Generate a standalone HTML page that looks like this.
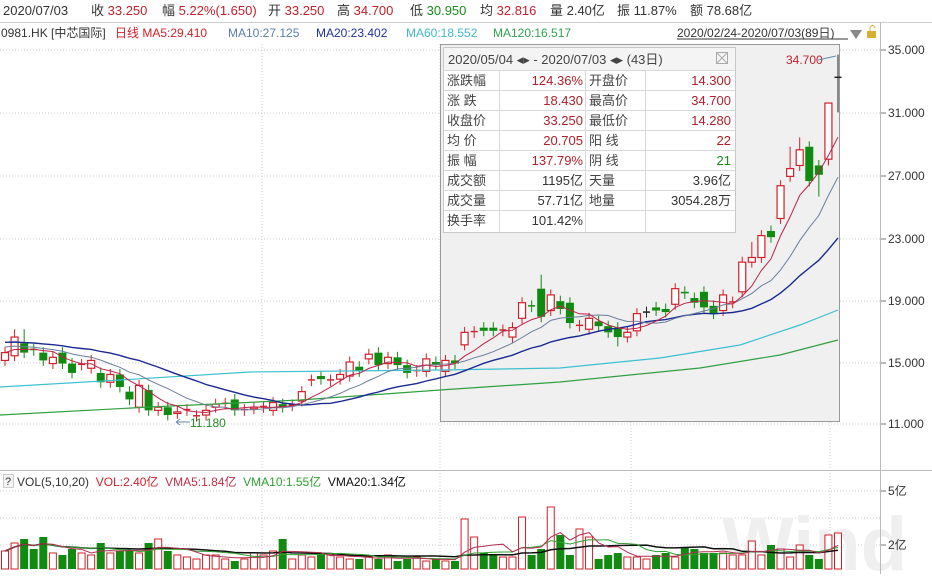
<!DOCTYPE html><html><head><meta charset="utf-8"><style>
body{margin:0;width:932px;height:574px;overflow:hidden;background:#fff;font-family:"Liberation Sans","Noto Sans CJK SC",sans-serif;}
svg text{font-family:"Liberation Sans","Noto Sans CJK SC",sans-serif;}
</style></head><body>
<svg id="s" width="932" height="574" xmlns="http://www.w3.org/2000/svg">
<rect width="932" height="574" fill="#fff"/>
<!-- top bar -->
<g font-size="13" fill="#333">
<text x="3" y="15">2020/07/03</text>
<text x="91" y="15">收 <tspan fill="#c0202a">33.250</tspan></text>
<text x="162" y="15">幅 <tspan fill="#c0202a">5.22%(1.650)</tspan></text>
<text x="268" y="15">开 <tspan fill="#c0202a">33.250</tspan></text>
<text x="337" y="15">高 <tspan fill="#c0202a">34.700</tspan></text>
<text x="410" y="15">低 <tspan fill="#1a8a1a">30.950</tspan></text>
<text x="480" y="15">均 <tspan fill="#c0202a">32.816</tspan></text>
<text x="550" y="15">量 2.40亿</text>
<text x="617" y="15">振 11.87%</text>
<text x="690" y="15">额 78.68亿</text>
</g>
<line x1="0" y1="22.5" x2="932" y2="22.5" stroke="#ccc"/>
<g font-size="12">
<text x="1" y="37" fill="#333">0981.HK [中芯国际]</text>
<text x="115" y="37" fill="#d0202a">日线 MA5:29.410</text>
<text x="228" y="37" fill="#5a7fa8">MA10:27.125</text>
<text x="316" y="37" fill="#2030a0">MA20:23.402</text>
<text x="406" y="37" fill="#40b8c8">MA60:18.552</text>
<text x="493" y="37" fill="#30a050">MA120:16.517</text>
</g>
<text x="677" y="37" font-size="12" fill="#333">2020/02/24-2020/07/03(89日)</text>
<line x1="677" y1="39" x2="848" y2="39" stroke="#333"/>
<path d="M850 30 L862 30 L856 39 Z" fill="#888"/>
<rect x="867" y="31" width="9" height="7" fill="#d8b030"/>
<path d="M870 31 v-3 a2.5 2.5 0 0 1 5 0" fill="none" stroke="#d8b030"/>
<!-- grid -->
<g stroke="#ccc" stroke-dasharray="1,2">
<line x1="0" y1="50" x2="880" y2="50"/><line x1="0" y1="113" x2="880" y2="113"/><line x1="0" y1="176" x2="880" y2="176"/><line x1="0" y1="239" x2="880" y2="239"/><line x1="0" y1="301" x2="880" y2="301"/><line x1="0" y1="363" x2="880" y2="363"/><line x1="0" y1="424" x2="880" y2="424"/>
<line x1="262" y1="44" x2="262" y2="570"/><line x1="440" y1="44" x2="440" y2="570"/><line x1="631" y1="44" x2="631" y2="570"/><line x1="830" y1="44" x2="830" y2="570"/>
<line x1="0" y1="491" x2="880" y2="491"/><line x1="0" y1="518" x2="880" y2="518"/><line x1="0" y1="545" x2="880" y2="545"/>
</g>
<text x="722" y="570" font-size="76" font-weight="bold" fill="#efefef">Wind</text>
<line x1="880.5" y1="22" x2="880.5" y2="574" stroke="#bbb"/>
<g font-size="12" fill="#333">
<text x="888" y="54">35.000</text><text x="888" y="117">31.000</text><text x="888" y="180">27.000</text><text x="888" y="243">23.000</text><text x="888" y="305">19.000</text><text x="888" y="367">15.000</text><text x="888" y="428">11.000</text>
<text x="888" y="495">5亿</text><text x="888" y="549">2亿</text>
</g>
<g stroke="#777"><line x1="881" y1="50" x2="886" y2="50"/><line x1="881" y1="113" x2="886" y2="113"/><line x1="881" y1="176" x2="886" y2="176"/><line x1="881" y1="239" x2="886" y2="239"/><line x1="881" y1="301" x2="886" y2="301"/><line x1="881" y1="363" x2="886" y2="363"/><line x1="881" y1="424" x2="886" y2="424"/><line x1="881" y1="491" x2="886" y2="491"/><line x1="881" y1="545" x2="886" y2="545"/></g>
<!-- selection -->
<rect x="440.5" y="44.5" width="399" height="377" fill="#f0f0f0" stroke="#999"/>
<line x1="0" y1="470.5" x2="932" y2="470.5" stroke="#bbb"/>
<g id="chart"></g>
<!-- info panel -->
<g font-size="13">
<rect x="443.5" y="47.5" width="292" height="185" fill="#fff" stroke="#c8c8c8"/>
<rect x="444" y="48" width="291" height="22" fill="#f4f4f4"/>
<text x="448" y="64" fill="#444">2020/05/04 ◂▸ - 2020/07/03 ◂▸  (43日)</text>
<rect x="716.5" y="52.5" width="11" height="11" fill="none" stroke="#aaa"/><path d="M717 53 L727 63 M727 53 L717 63" stroke="#aaa"/>
<g stroke="#d8d8d8"><line x1="443" y1="70.5" x2="735" y2="70.5"/><line x1="443" y1="90.5" x2="735" y2="90.5"/><line x1="443" y1="110.5" x2="735" y2="110.5"/><line x1="443" y1="130.5" x2="735" y2="130.5"/><line x1="443" y1="150.5" x2="735" y2="150.5"/><line x1="443" y1="170.5" x2="735" y2="170.5"/><line x1="443" y1="190.5" x2="735" y2="190.5"/><line x1="443" y1="210.5" x2="735" y2="210.5"/>
<line x1="499.5" y1="70" x2="499.5" y2="232"/><line x1="585.5" y1="70" x2="585.5" y2="232"/><line x1="645.5" y1="70" x2="645.5" y2="232"/></g>
<g fill="#444"><text x="447" y="85">涨跌幅</text><text x="447" y="105">涨  跌</text><text x="447" y="125">收盘价</text><text x="447" y="145">均  价</text><text x="447" y="165">振  幅</text><text x="447" y="185">成交额</text><text x="447" y="205">成交量</text><text x="447" y="225">换手率</text>
<text x="589" y="85">开盘价</text><text x="589" y="105">最高价</text><text x="589" y="125">最低价</text><text x="589" y="145">阳  线</text><text x="589" y="165">阴  线</text><text x="589" y="185">天量</text><text x="589" y="205">地量</text></g>
<g text-anchor="end" fill="#b0202a"><text x="583" y="85">124.36%</text><text x="583" y="105">18.430</text><text x="583" y="125">33.250</text><text x="583" y="145">20.705</text><text x="583" y="165">137.79%</text>
<text x="731" y="85">14.300</text><text x="731" y="105">34.700</text><text x="731" y="125">14.280</text><text x="731" y="145">22</text></g>
<g text-anchor="end" fill="#333"><text x="583" y="185">1195亿</text><text x="583" y="205">57.71亿</text><text x="583" y="225">101.42%</text><text x="731" y="185">3.96亿</text><text x="731" y="205">3054.28万</text><text x="731" y="165" fill="#1a8a1a">21</text></g>
</g>
<text x="786" y="64" font-size="12" fill="#c0202a">34.700</text>
<path d="M818 60 L836 56" stroke="#5a8fa8"/>
<text x="190" y="427" font-size="12" fill="#2a8a2a">11.180</text>
<path d="M176 422 L190 422 M176 422 l4 -3 M176 422 l4 3" stroke="#6a8ab0" fill="none"/>
<!-- vol header -->
<rect x="3.5" y="474.5" width="10" height="13" fill="#f4f4f4" stroke="#ccc"/>
<text x="5" y="485" font-size="11" fill="#333">?</text>
<text x="17" y="486" font-size="12" fill="#333" xml:space="preserve">VOL(5,10,20)  <tspan fill="#d0202a">VOL:2.40亿</tspan>  <tspan fill="#c0304a">VMA5:1.84亿</tspan>  <tspan fill="#30a030">VMA10:1.55亿</tspan>  <tspan fill="#111">VMA20:1.34亿</tspan></text>
</svg>
<script>
var D=[[15.1,15.6],[15.4,16.6],[16.2,15.6],[15.8,15.75],[15.6,15.1],[14.9,15.3],[15.6,14.9],[14.9,14.3],[14.8,14.85],[14.6,15.1],[14.3,13.7],[13.7,14.2],[14.2,13.4],[13.1,12.6],[12.1,13.5],[13.2,11.9],[11.9,12.1],[12.1,11.6],[11.7,11.8],[11.9,11.95],[11.5,11.55],[11.6,11.9],[12.1,12.3],[12.3,12.35],[12.6,11.9],[11.9,11.95],[12.0,12.1],[12.1,12.15],[11.9,12.4],[12.3,12.1],[12.2,12.25],[12.5,13.1],[13.8,13.85],[14.1,13.9],[13.8,13.85],[13.9,14.2],[14.1,15.0],[14.7,14.4],[15.2,15.5],[15.6,14.8],[14.9,15.3],[15.3,14.8],[14.8,14.3],[14.4,14.45],[14.4,15.2],[15.0,14.8],[14.4,15.1],[15.1,14.9],[16.1,16.9],[16.9,16.95],[17.2,17.0],[17.2,17.0],[17.0,17.05],[16.6,17.2],[17.8,18.8],[18.6,18.55],[19.7,17.9],[18.3,19.3],[18.9,18.4],[18.8,17.5],[17.3,17.35],[17.1,17.8],[17.6,17.3],[17.3,16.9],[17.2,16.6],[16.6,16.9],[17.0,18.1],[18.2,18.2],[18.5,18.3],[18.4,18.2],[18.7,19.7],[19.5,19.4],[19.1,18.8],[19.5,18.5],[18.6,18.1],[18.3,19.3],[18.8,18.85],[19.5,21.4],[21.4,21.7],[21.7,23.1],[23.4,23.0],[24.2,26.3],[26.9,27.4],[27.6,28.6],[28.8,26.6],[27.6,27.0],[28.0,31.6],[33.25,33.25]];
var H={1:17.1,2:17.1,56:20.6,78:22.7,82:28.8,83:29.4,86:27.6,87:34.7};var L={20:11.18,64:16.0,85:25.6,87:31.0};
var n=D.length,x0=5,dx=(838-5)/(n-1);
function Y(p){return 50+(35-p)*15.6;}
var s='';
var vh=[18,26,30,20,32,16,14,20,16,14,26,16,18,18,16,26,30,18,14,12,10,14,14,10,8,10,16,14,18,30,10,14,12,16,14,12,10,10,12,10,14,8,10,12,8,10,8,8,50,32,16,14,12,12,52,14,20,62,34,14,40,32,10,14,16,12,12,10,14,16,12,22,20,16,16,16,14,14,28,14,24,20,12,24,14,10,34,36];
for(var i=0;i<n;i++){var o=D[i][0],c=D[i][1],x=x0+i*dx;var hi=H[i]||Math.max(o,c)+0.35,lo=L[i]||Math.min(o,c)-0.35;
var up=c>=o,col=(i==n-1||i==67)?'#222':(up?'#d0202a':'#108a10');
var yt=Y(Math.max(o,c)),yb=Y(Math.min(o,c));
s+='<line x1="'+x+'" y1="'+Y(hi)+'" x2="'+x+'" y2="'+yt+'" stroke="'+col+'"/><line x1="'+x+'" y1="'+yb+'" x2="'+x+'" y2="'+Y(lo)+'" stroke="'+col+'"/>';
if(yb-yt<1.5){s+='<line x1="'+(x-3.5)+'" y1="'+yt+'" x2="'+(x+3.5)+'" y2="'+yt+'" stroke="'+col+'" stroke-width="1.5"/>';}
else if(up)s+='<rect x="'+(x-3.5)+'" y="'+yt+'" width="7" height="'+(yb-yt)+'" fill="#fff" stroke="'+col+'" stroke-width="1.2"/>';
else s+='<rect x="'+(x-4)+'" y="'+yt+'" width="8" height="'+(yb-yt)+'" fill="'+col+'"/>';
var h=vh[i]||20;var vy=569-h;
if(up||i==n-1)s+='<rect x="'+(x-3.5)+'" y="'+vy+'" width="7" height="'+h+'" fill="#fff" stroke="#d0202a"/>';else s+='<rect x="'+(x-4)+'" y="'+vy+'" width="8" height="'+h+'" fill="#108a10"/>';
}
function ma(k,col,w,pre){var p=[];for(var i=0;i<n;i++){var sum=0,c=0;for(var j=i-k+1;j<=i;j++){sum+=(j>=0?D[j][1]:pre);c++;}p.push((x0+i*dx).toFixed(1)+','+Y(sum/c).toFixed(1));}return '<polyline points="'+p.join(' ')+'" fill="none" stroke="'+col+'" stroke-width="'+w+'"/>';}
function vma(k,col,w){var p=[];for(var i=0;i<n;i++){var sum=0,c=0;for(var j=Math.max(0,i-k+1);j<=i;j++){sum+=vh[j];c++;}p.push((x0+i*dx).toFixed(1)+','+(569-sum/c).toFixed(1));}return '<polyline points="'+p.join(' ')+'" fill="none" stroke="'+col+'" stroke-width="'+w+'"/>';}
s+='<polyline points="0,387 120,380 250,372 440,370 560,368 660,358 740,345 800,325 838,310" fill="none" stroke="#3cc0d0" stroke-width="1.2"/>';
s+='<polyline points="0,415 150,407 300,400 440,390 560,382 700,368 780,355 838,340" fill="none" stroke="#30a040" stroke-width="1.2"/>';
s+=ma(20,'#1a2a90',1.4,16.3)+ma(10,'#6a7f9a',1,16.0)+ma(5,'#c0204a',1,15.6);
s+=vma(20,'#111',1.5)+vma(10,'#30a030',1)+vma(5,'#b03050',1);
document.getElementById('chart').innerHTML=s;
</script>
</body></html>
